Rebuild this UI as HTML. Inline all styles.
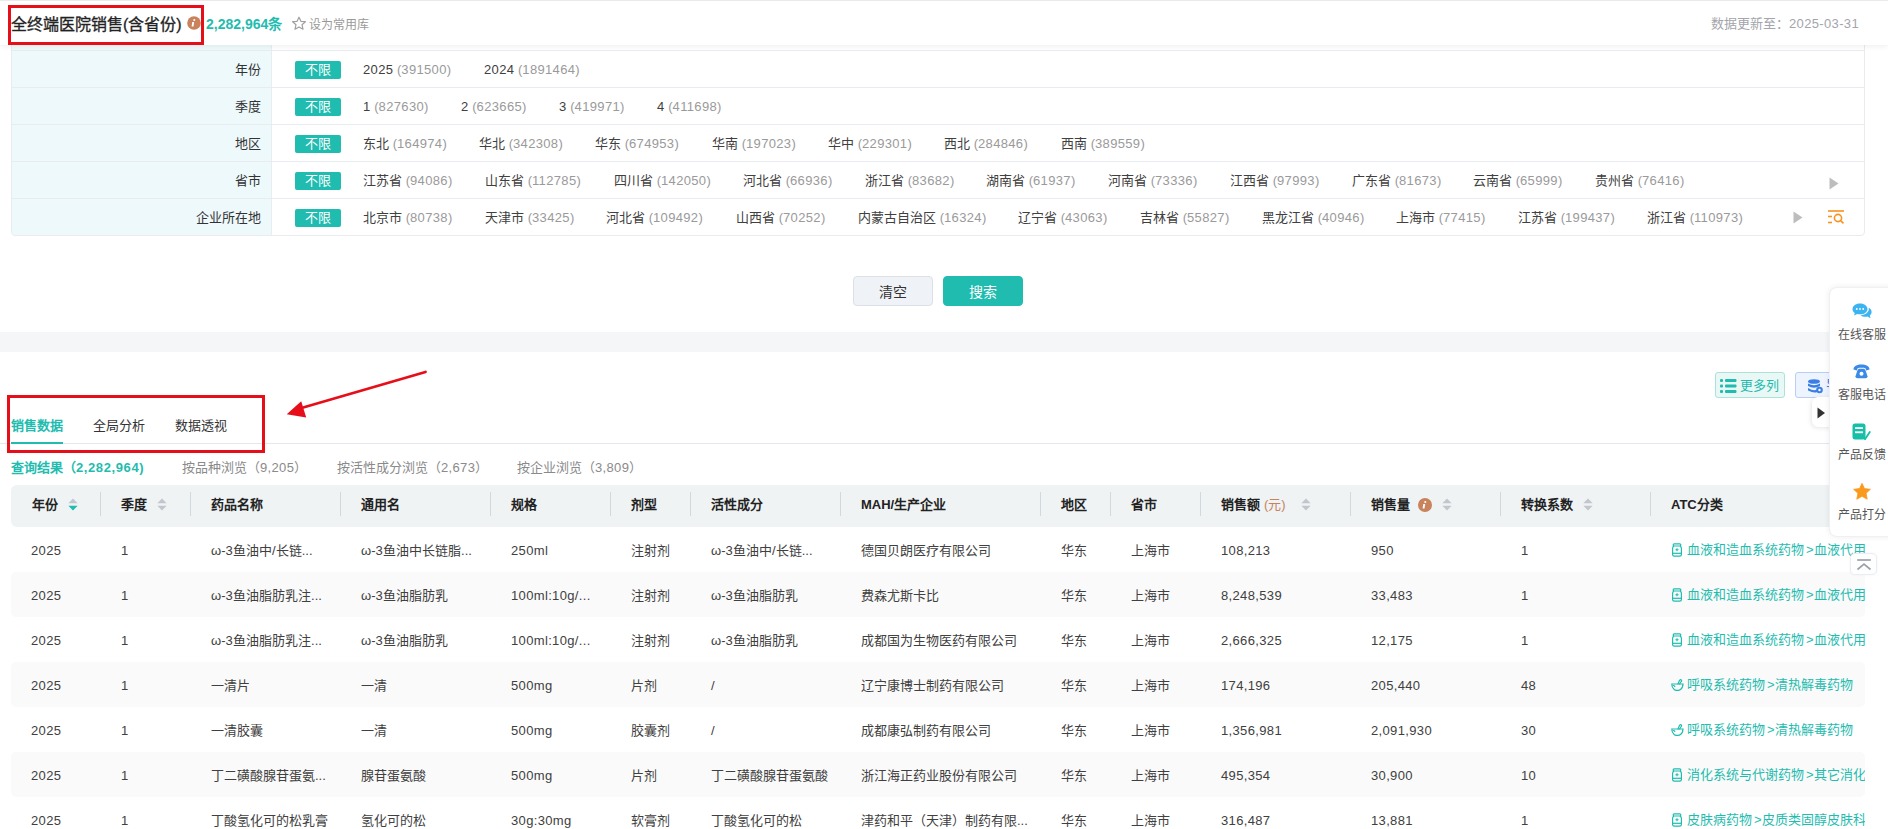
<!DOCTYPE html><html lang="zh-CN"><head><meta charset="utf-8"><style>
*{box-sizing:border-box;margin:0;padding:0}
html,body{width:1888px;height:829px;overflow:hidden;background:#fff}
body{position:relative;font-family:"Liberation Sans",sans-serif;font-size:13px;color:#333}
.a{position:absolute;white-space:nowrap}
.n{letter-spacing:.35px}
.topline{left:0;top:0;width:1888px;height:1px;background:#ececec}
.hdr{left:0;top:1px;width:1888px;height:44px;background:#fff;box-shadow:0 2px 5px rgba(0,0,0,.06);z-index:2}
.title{left:11px;top:14px;font-size:16px;line-height:22px;color:#222;-webkit-text-stroke:.3px #222}
.cnt{left:206px;top:14px;font-size:14px;font-weight:bold;line-height:20px;color:#1fbcaf}
.fav{left:309px;top:16px;font-size:12px;line-height:18px;color:#999}
.upd{left:1711px;top:14px;font-size:13px;line-height:20px;color:#a3a5ab}
.fbox{left:11px;top:36px;width:1854px;height:200px;border:1px solid #e8ecf0;border-radius:4px;background:linear-gradient(to right,#eef9fc 259px,#e9edf0 259px,#e9edf0 260px,#fff 260px);overflow:hidden}
.frow{position:absolute;left:0;width:1852px;height:37px;border-top:1px solid #e8ecf0}
.flab{position:absolute;left:0;top:0;width:260px;height:37px;background:linear-gradient(to right,#eef9fc 259px,#e9edf0 259px);text-align:right;padding-right:11px;line-height:37px;color:#333}
.tag{position:absolute;left:283px;top:10px;width:46px;height:18px;background:#1fbcaf;color:#fff;border-radius:2px;text-align:center;line-height:18px;font-size:13px}
.it{position:absolute;top:1px;line-height:36px;color:#404040}
.it i{font-style:normal;color:#9a9a9a}
.btn{top:276px;width:80px;height:30px;border-radius:4px;text-align:center;line-height:30px;font-size:14px}
.band{left:0;top:332px;width:1888px;height:20px;background:#f5f6f8}
.tabline{left:0;top:443px;width:1888px;height:1px;background:#e4e7ed}
.tab{top:416px;line-height:20px;font-size:13px;color:#333}
.sub{top:458px;line-height:20px;font-size:13px;color:#8a8a8a}
.thead{left:11px;top:485px;width:1854px;height:42px;background:#eff3f4;border-radius:6px}
.th{top:484px;line-height:42px;font-weight:bold;color:#222}
.dv{top:492px;width:1px;height:24px;background:#d2d9dc}
.stripe{left:11px;width:1854px;height:45px;background:#fafafa;border-radius:5px}
.td{line-height:45px;color:#404040;margin-top:1px}
.atc{line-height:45px;color:#1fbcaf}
.atc b{font-weight:normal;margin-left:2px}
.panel{left:1829px;top:287px;width:80px;height:250px;background:#fff;border-radius:8px;box-shadow:0 0 6px rgba(0,0,0,.08);border:1px solid #eef0f4;z-index:5}
.pt{left:1838px;font-size:12px;line-height:14px;color:#555;z-index:6}
</style></head><body>
<div class="a topline"></div>
<div class="a hdr"></div>
<div class="a title" style="z-index:3">全终端医院销售(含省份)</div>
<div class="a" style="left:8px;top:5px;width:196px;height:40px;border:3px solid #e60f19;z-index:4"></div>
<svg class="a" style="left:187px;top:16px;z-index:3" width="14" height="14" viewBox="0 0 14 14"><circle cx="7" cy="7" r="6.8" fill="#c8825c"/><rect x="6.1" y="6" width="1.9" height="4.6" fill="#fff" transform="skewX(-8)"/><circle cx="7.3" cy="4" r="1.05" fill="#fff"/></svg>
<div class="a cnt" style="z-index:3">2,282,964条</div>
<svg class="a" style="left:291px;top:16px;z-index:3" width="16" height="15" viewBox="0 0 16 15"><path d="M8 1.2 L9.9 5.3 L14.4 5.7 L11 8.7 L12 13.2 L8 10.9 L4 13.2 L5 8.7 L1.6 5.7 L6.1 5.3 Z" fill="none" stroke="#a0a0a0" stroke-width="1.2" stroke-linejoin="round"/></svg>
<div class="a fav" style="z-index:3">设为常用库</div>
<div class="a upd" style="z-index:3">数据更新至：<span class=n>2025-03-31</span></div>
<div class="a fbox">
<div class="frow" style="top:13px">
<div class="flab">年份</div>
<div class="tag">不限</div>
<div class="it" style="left:351px"><span class=n>2025</span> <i>(<span class=n>391500</span>)</i></div>
<div class="it" style="left:472px"><span class=n>2024</span> <i>(<span class=n>1891464</span>)</i></div>
</div>
<div class="frow" style="top:50px">
<div class="flab">季度</div>
<div class="tag">不限</div>
<div class="it" style="left:351px"><span class=n>1</span> <i>(<span class=n>827630</span>)</i></div>
<div class="it" style="left:449px"><span class=n>2</span> <i>(<span class=n>623665</span>)</i></div>
<div class="it" style="left:547px"><span class=n>3</span> <i>(<span class=n>419971</span>)</i></div>
<div class="it" style="left:645px"><span class=n>4</span> <i>(<span class=n>411698</span>)</i></div>
</div>
<div class="frow" style="top:87px">
<div class="flab">地区</div>
<div class="tag">不限</div>
<div class="it" style="left:351px">东北 <i>(<span class=n>164974</span>)</i></div>
<div class="it" style="left:467px">华北 <i>(<span class=n>342308</span>)</i></div>
<div class="it" style="left:583px">华东 <i>(<span class=n>674953</span>)</i></div>
<div class="it" style="left:700px">华南 <i>(<span class=n>197023</span>)</i></div>
<div class="it" style="left:816px">华中 <i>(<span class=n>229301</span>)</i></div>
<div class="it" style="left:932px">西北 <i>(<span class=n>284846</span>)</i></div>
<div class="it" style="left:1049px">西南 <i>(<span class=n>389559</span>)</i></div>
</div>
<div class="frow" style="top:124px">
<div class="flab">省市</div>
<div class="tag">不限</div>
<div class="it" style="left:351px">江苏省 <i>(<span class=n>94086</span>)</i></div>
<div class="it" style="left:473px">山东省 <i>(<span class=n>112785</span>)</i></div>
<div class="it" style="left:602px">四川省 <i>(<span class=n>142050</span>)</i></div>
<div class="it" style="left:731px">河北省 <i>(<span class=n>66936</span>)</i></div>
<div class="it" style="left:853px">浙江省 <i>(<span class=n>83682</span>)</i></div>
<div class="it" style="left:974px">湖南省 <i>(<span class=n>61937</span>)</i></div>
<div class="it" style="left:1096px">河南省 <i>(<span class=n>73336</span>)</i></div>
<div class="it" style="left:1218px">江西省 <i>(<span class=n>97993</span>)</i></div>
<div class="it" style="left:1340px">广东省 <i>(<span class=n>81673</span>)</i></div>
<div class="it" style="left:1461px">云南省 <i>(<span class=n>65999</span>)</i></div>
<div class="it" style="left:1583px">贵州省 <i>(<span class=n>76416</span>)</i></div>
</div>
<div class="frow" style="top:161px">
<div class="flab">企业所在地</div>
<div class="tag">不限</div>
<div class="it" style="left:351px">北京市 <i>(<span class=n>80738</span>)</i></div>
<div class="it" style="left:473px">天津市 <i>(<span class=n>33425</span>)</i></div>
<div class="it" style="left:594px">河北省 <i>(<span class=n>109492</span>)</i></div>
<div class="it" style="left:724px">山西省 <i>(<span class=n>70252</span>)</i></div>
<div class="it" style="left:846px">内蒙古自治区 <i>(<span class=n>16324</span>)</i></div>
<div class="it" style="left:1006px">辽宁省 <i>(<span class=n>43063</span>)</i></div>
<div class="it" style="left:1128px">吉林省 <i>(<span class=n>55827</span>)</i></div>
<div class="it" style="left:1250px">黑龙江省 <i>(<span class=n>40946</span>)</i></div>
<div class="it" style="left:1384px">上海市 <i>(<span class=n>77415</span>)</i></div>
<div class="it" style="left:1506px">江苏省 <i>(<span class=n>199437</span>)</i></div>
<div class="it" style="left:1635px">浙江省 <i>(<span class=n>110973</span>)</i></div>
</div>
</div>
<svg class="a" style="left:1829px;top:177px" width="10" height="13" viewBox="0 0 10 13"><path d="M0.5 0.5 L9.5 6.5 L0.5 12.5Z" fill="#bdbdbd"/></svg>
<svg class="a" style="left:1793px;top:211px" width="10" height="13" viewBox="0 0 10 13"><path d="M0.5 0.5 L9.5 6.5 L0.5 12.5Z" fill="#bdbdbd"/></svg>
<svg class="a" style="left:1828px;top:210px" width="17" height="14" viewBox="0 0 17 14"><g fill="none" stroke="#f7931e" stroke-width="1.6"><path d="M0 1 H16"/><path d="M0 6.5 H4"/><path d="M0 12.5 H4"/><circle cx="10" cy="8" r="3.6"/><path d="M12.6 10.6 L15.5 13.3"/></g></svg>
<div class="a btn" style="left:853px;background:#eff2f7;border:1px solid #dcdfe6;color:#333">清空</div>
<div class="a btn" style="left:943px;background:#1fbcaf;border:1px solid #1fbcaf;color:#fff">搜索</div>
<div class="a band"></div>
<div class="a tabline"></div>
<div class="a tab" style="left:11px;color:#1fbcaf;font-weight:bold">销售数据</div>
<div class="a" style="left:11px;top:442px;width:52px;height:2px;background:#1fbcaf"></div>
<div class="a tab" style="left:93px">全局分析</div>
<div class="a tab" style="left:175px">数据透视</div>
<div class="a" style="left:7px;top:395px;width:258px;height:58px;border:3px solid #e60f19;z-index:4"></div>
<svg class="a" style="left:280px;top:365px;z-index:4" width="155" height="60" viewBox="280 365 155 60"><path d="M425.5 372 L298 409" stroke="#e60f19" stroke-width="2.8" stroke-linecap="round"/><path d="M286.7 414.3 L301.2 401.3 L306.2 417.6 Z" fill="#e60f19"/></svg>
<div class="a sub" style="left:11px;color:#1fbcaf;font-weight:bold">查询结果（<span style="letter-spacing:.6px">2,282,964)</span></div>
<div class="a sub" style="left:182px">按品种浏览（<span class=n>9,205</span>）</div>
<div class="a sub" style="left:337px">按活性成分浏览（<span class=n>2,673</span>）</div>
<div class="a sub" style="left:517px">按企业浏览（<span class=n>3,809</span>）</div>
<div class="a" style="left:1715px;top:372px;width:70px;height:26px;border:1px solid #a9e3da;background:#eaf8f5;border-radius:3px"></div>
<svg class="a" style="left:1720px;top:379px" width="17" height="14" viewBox="0 0 17 14"><g fill="#1fbcaf"><rect x="0" y="0" width="3" height="3" rx="1"/><rect x="0" y="5.5" width="3" height="3" rx="1"/><rect x="0" y="11" width="3" height="3" rx="1"/><rect x="5" y="0" width="11.5" height="3" rx="1"/><rect x="5" y="5.5" width="11.5" height="3" rx="1"/><rect x="5" y="11" width="11.5" height="3" rx="1"/></g></svg>
<div class="a" style="left:1740px;top:376px;line-height:20px;color:#1fbcaf">更多列</div>
<div class="a" style="left:1795px;top:372px;width:80px;height:26px;border:1px solid #b7cff5;background:#eef4fd;border-radius:3px"></div>
<svg class="a" style="left:1808px;top:379px" width="15" height="15" viewBox="0 0 15 15"><g fill="#3b7ee6"><ellipse cx="6" cy="2.5" rx="6" ry="2.3"/><path d="M0 4.5 Q6 8 12 4.5 V7 Q6 10.5 0 7Z"/><path d="M0 9 Q6 12.5 9 10.5 V13 Q6 14.5 0 11.5Z"/><circle cx="11.5" cy="11" r="3.3"/></g><circle cx="11.5" cy="11" r="1.2" fill="#fff"/></svg>
<div class="a" style="left:1826px;top:375px;line-height:20px;color:#3b7ee6">导</div>
<div class="a" style="left:1812px;top:397px;width:22px;height:30px;background:#fff;border-radius:6px 0 0 6px;box-shadow:-1px 1px 4px rgba(0,0,0,.1);z-index:4"></div>
<svg class="a" style="left:1817px;top:407px;z-index:6" width="9" height="12" viewBox="0 0 9 12"><path d="M0.5 0.5 L8 6 L0.5 11.5Z" fill="#333"/></svg>
<div class="a thead"></div>
<div class="a th" style="left:32px">年份</div>
<div class="a th" style="left:121px">季度</div>
<div class="a th" style="left:211px">药品名称</div>
<div class="a th" style="left:361px">通用名</div>
<div class="a th" style="left:511px">规格</div>
<div class="a th" style="left:631px">剂型</div>
<div class="a th" style="left:711px">活性成分</div>
<div class="a th" style="left:861px">MAH/生产企业</div>
<div class="a th" style="left:1061px">地区</div>
<div class="a th" style="left:1131px">省市</div>
<div class="a th" style="left:1221px">销售额</div>
<div class="a th" style="left:1371px">销售量</div>
<div class="a th" style="left:1521px">转换系数</div>
<div class="a th" style="left:1671px">ATC分类</div>
<div class="a dv" style="left:100px"></div>
<div class="a dv" style="left:190px"></div>
<div class="a dv" style="left:340px"></div>
<div class="a dv" style="left:490px"></div>
<div class="a dv" style="left:610px"></div>
<div class="a dv" style="left:690px"></div>
<div class="a dv" style="left:840px"></div>
<div class="a dv" style="left:1040px"></div>
<div class="a dv" style="left:1110px"></div>
<div class="a dv" style="left:1200px"></div>
<div class="a dv" style="left:1350px"></div>
<div class="a dv" style="left:1500px"></div>
<div class="a dv" style="left:1650px"></div>
<div class="a" style="left:1264px;top:484px;line-height:42px;color:#c8825c">(元)</div>
<svg class="a" style="left:68px;top:498px" width="10" height="13" viewBox="0 0 10 13"><path d="M5 0.4 L9.6 5.3 H0.4Z" fill="#c3c6cc"/><path d="M5 12.6 L9.6 7.7 H0.4Z" fill="#1fbcaf"/></svg>
<svg class="a" style="left:157px;top:498px" width="10" height="13" viewBox="0 0 10 13"><path d="M5 0.4 L9.6 5.3 H0.4Z" fill="#c3c6cc"/><path d="M5 12.6 L9.6 7.7 H0.4Z" fill="#c3c6cc"/></svg>
<svg class="a" style="left:1301px;top:498px" width="10" height="13" viewBox="0 0 10 13"><path d="M5 0.4 L9.6 5.3 H0.4Z" fill="#c3c6cc"/><path d="M5 12.6 L9.6 7.7 H0.4Z" fill="#c3c6cc"/></svg>
<svg class="a" style="left:1442px;top:498px" width="10" height="13" viewBox="0 0 10 13"><path d="M5 0.4 L9.6 5.3 H0.4Z" fill="#c3c6cc"/><path d="M5 12.6 L9.6 7.7 H0.4Z" fill="#c3c6cc"/></svg>
<svg class="a" style="left:1583px;top:498px" width="10" height="13" viewBox="0 0 10 13"><path d="M5 0.4 L9.6 5.3 H0.4Z" fill="#c3c6cc"/><path d="M5 12.6 L9.6 7.7 H0.4Z" fill="#c3c6cc"/></svg>
<svg class="a" style="left:1418px;top:498px" width="14" height="14" viewBox="0 0 14 14"><circle cx="7" cy="7" r="7" fill="#c8825c"/><rect x="6.1" y="6" width="1.9" height="4.6" fill="#fff" transform="skewX(-8)"/><circle cx="7.3" cy="4" r="1.05" fill="#fff"/></svg>
<div class="a td" style="left:31px;top:527px"><span class=n>2025</span></div>
<div class="a td" style="left:121px;top:527px"><span class=n>1</span></div>
<div class="a td" style="left:211px;top:527px">ω-<span class=n>3</span>鱼油中/长链...</div>
<div class="a td" style="left:361px;top:527px">ω-<span class=n>3</span>鱼油中长链脂...</div>
<div class="a td" style="left:511px;top:527px"><span class=n>250ml</span></div>
<div class="a td" style="left:631px;top:527px">注射剂</div>
<div class="a td" style="left:711px;top:527px">ω-<span class=n>3</span>鱼油中/长链...</div>
<div class="a td" style="left:861px;top:527px">德国贝朗医疗有限公司</div>
<div class="a td" style="left:1061px;top:527px">华东</div>
<div class="a td" style="left:1131px;top:527px">上海市</div>
<div class="a td" style="left:1221px;top:527px"><span class=n>108,213</span></div>
<div class="a td" style="left:1371px;top:527px"><span class=n>950</span></div>
<div class="a td" style="left:1521px;top:527px"><span class=n>1</span></div>
<svg class="a" style="left:1672px;top:543px" width="10" height="14" viewBox="0 0 10 14"><g fill="none" stroke="#1fbcaf" stroke-width="1.2"><rect x="1.2" y="0.8" width="7.6" height="2.2" rx="1"/><path d="M1.8 3 Q0.6 4 0.6 5.5 V11.5 Q0.6 13.2 2.3 13.2 H7.7 Q9.4 13.2 9.4 11.5 V5.5 Q9.4 4 8.2 3"/><path d="M0.6 10.3 H9.4"/></g><path d="M3.4 6.8 H6.6 M5 5.3 V8.3" stroke="#1fbcaf" stroke-width="1.1"/></svg>
<div class="a atc" style="left:1687px;top:527px;width:178px;overflow:hidden">血液和造血系统药物<b>&gt;</b>血液代用品</div>
<div class="a stripe" style="top:572px"></div>
<div class="a td" style="left:31px;top:572px"><span class=n>2025</span></div>
<div class="a td" style="left:121px;top:572px"><span class=n>1</span></div>
<div class="a td" style="left:211px;top:572px">ω-<span class=n>3</span>鱼油脂肪乳注...</div>
<div class="a td" style="left:361px;top:572px">ω-<span class=n>3</span>鱼油脂肪乳</div>
<div class="a td" style="left:511px;top:572px"><span class=n>100ml:10g/...</span></div>
<div class="a td" style="left:631px;top:572px">注射剂</div>
<div class="a td" style="left:711px;top:572px">ω-<span class=n>3</span>鱼油脂肪乳</div>
<div class="a td" style="left:861px;top:572px">费森尤斯卡比</div>
<div class="a td" style="left:1061px;top:572px">华东</div>
<div class="a td" style="left:1131px;top:572px">上海市</div>
<div class="a td" style="left:1221px;top:572px"><span class=n>8,248,539</span></div>
<div class="a td" style="left:1371px;top:572px"><span class=n>33,483</span></div>
<div class="a td" style="left:1521px;top:572px"><span class=n>1</span></div>
<svg class="a" style="left:1672px;top:588px" width="10" height="14" viewBox="0 0 10 14"><g fill="none" stroke="#1fbcaf" stroke-width="1.2"><rect x="1.2" y="0.8" width="7.6" height="2.2" rx="1"/><path d="M1.8 3 Q0.6 4 0.6 5.5 V11.5 Q0.6 13.2 2.3 13.2 H7.7 Q9.4 13.2 9.4 11.5 V5.5 Q9.4 4 8.2 3"/><path d="M0.6 10.3 H9.4"/></g><path d="M3.4 6.8 H6.6 M5 5.3 V8.3" stroke="#1fbcaf" stroke-width="1.1"/></svg>
<div class="a atc" style="left:1687px;top:572px;width:178px;overflow:hidden">血液和造血系统药物<b>&gt;</b>血液代用品</div>
<div class="a td" style="left:31px;top:617px"><span class=n>2025</span></div>
<div class="a td" style="left:121px;top:617px"><span class=n>1</span></div>
<div class="a td" style="left:211px;top:617px">ω-<span class=n>3</span>鱼油脂肪乳注...</div>
<div class="a td" style="left:361px;top:617px">ω-<span class=n>3</span>鱼油脂肪乳</div>
<div class="a td" style="left:511px;top:617px"><span class=n>100ml:10g/...</span></div>
<div class="a td" style="left:631px;top:617px">注射剂</div>
<div class="a td" style="left:711px;top:617px">ω-<span class=n>3</span>鱼油脂肪乳</div>
<div class="a td" style="left:861px;top:617px">成都国为生物医药有限公司</div>
<div class="a td" style="left:1061px;top:617px">华东</div>
<div class="a td" style="left:1131px;top:617px">上海市</div>
<div class="a td" style="left:1221px;top:617px"><span class=n>2,666,325</span></div>
<div class="a td" style="left:1371px;top:617px"><span class=n>12,175</span></div>
<div class="a td" style="left:1521px;top:617px"><span class=n>1</span></div>
<svg class="a" style="left:1672px;top:633px" width="10" height="14" viewBox="0 0 10 14"><g fill="none" stroke="#1fbcaf" stroke-width="1.2"><rect x="1.2" y="0.8" width="7.6" height="2.2" rx="1"/><path d="M1.8 3 Q0.6 4 0.6 5.5 V11.5 Q0.6 13.2 2.3 13.2 H7.7 Q9.4 13.2 9.4 11.5 V5.5 Q9.4 4 8.2 3"/><path d="M0.6 10.3 H9.4"/></g><path d="M3.4 6.8 H6.6 M5 5.3 V8.3" stroke="#1fbcaf" stroke-width="1.1"/></svg>
<div class="a atc" style="left:1687px;top:617px;width:178px;overflow:hidden">血液和造血系统药物<b>&gt;</b>血液代用品</div>
<div class="a stripe" style="top:662px"></div>
<div class="a td" style="left:31px;top:662px"><span class=n>2025</span></div>
<div class="a td" style="left:121px;top:662px"><span class=n>1</span></div>
<div class="a td" style="left:211px;top:662px">一清片</div>
<div class="a td" style="left:361px;top:662px">一清</div>
<div class="a td" style="left:511px;top:662px"><span class=n>500mg</span></div>
<div class="a td" style="left:631px;top:662px">片剂</div>
<div class="a td" style="left:711px;top:662px">/</div>
<div class="a td" style="left:861px;top:662px">辽宁康博士制药有限公司</div>
<div class="a td" style="left:1061px;top:662px">华东</div>
<div class="a td" style="left:1131px;top:662px">上海市</div>
<div class="a td" style="left:1221px;top:662px"><span class=n>174,196</span></div>
<div class="a td" style="left:1371px;top:662px"><span class=n>205,440</span></div>
<div class="a td" style="left:1521px;top:662px"><span class=n>48</span></div>
<svg class="a" style="left:1671px;top:679px" width="13" height="12" viewBox="0 0 13 12"><g fill="none" stroke="#1fbcaf" stroke-width="1.2" stroke-linecap="round"><path d="M0.8 5 H12 Q11.8 9 9.5 10.5 Q8.5 11.3 7 11.3 H5.5 Q4 11.3 3 10.3 Q0.8 8.5 0.8 5Z"/><path d="M7 5 L8.5 1.3 Q9.5 0.3 10.3 1 Q11 1.8 10 2.8 L8.6 5"/><path d="M2.5 6.5 Q3.3 6.4 3.8 7.4"/></g></svg>
<div class="a atc" style="left:1687px;top:662px;width:178px;overflow:hidden">呼吸系统药物<b>&gt;</b>清热解毒药物</div>
<div class="a td" style="left:31px;top:707px"><span class=n>2025</span></div>
<div class="a td" style="left:121px;top:707px"><span class=n>1</span></div>
<div class="a td" style="left:211px;top:707px">一清胶囊</div>
<div class="a td" style="left:361px;top:707px">一清</div>
<div class="a td" style="left:511px;top:707px"><span class=n>500mg</span></div>
<div class="a td" style="left:631px;top:707px">胶囊剂</div>
<div class="a td" style="left:711px;top:707px">/</div>
<div class="a td" style="left:861px;top:707px">成都康弘制药有限公司</div>
<div class="a td" style="left:1061px;top:707px">华东</div>
<div class="a td" style="left:1131px;top:707px">上海市</div>
<div class="a td" style="left:1221px;top:707px"><span class=n>1,356,981</span></div>
<div class="a td" style="left:1371px;top:707px"><span class=n>2,091,930</span></div>
<div class="a td" style="left:1521px;top:707px"><span class=n>30</span></div>
<svg class="a" style="left:1671px;top:724px" width="13" height="12" viewBox="0 0 13 12"><g fill="none" stroke="#1fbcaf" stroke-width="1.2" stroke-linecap="round"><path d="M0.8 5 H12 Q11.8 9 9.5 10.5 Q8.5 11.3 7 11.3 H5.5 Q4 11.3 3 10.3 Q0.8 8.5 0.8 5Z"/><path d="M7 5 L8.5 1.3 Q9.5 0.3 10.3 1 Q11 1.8 10 2.8 L8.6 5"/><path d="M2.5 6.5 Q3.3 6.4 3.8 7.4"/></g></svg>
<div class="a atc" style="left:1687px;top:707px;width:178px;overflow:hidden">呼吸系统药物<b>&gt;</b>清热解毒药物</div>
<div class="a stripe" style="top:752px"></div>
<div class="a td" style="left:31px;top:752px"><span class=n>2025</span></div>
<div class="a td" style="left:121px;top:752px"><span class=n>1</span></div>
<div class="a td" style="left:211px;top:752px">丁二磺酸腺苷蛋氨...</div>
<div class="a td" style="left:361px;top:752px">腺苷蛋氨酸</div>
<div class="a td" style="left:511px;top:752px"><span class=n>500mg</span></div>
<div class="a td" style="left:631px;top:752px">片剂</div>
<div class="a td" style="left:711px;top:752px">丁二磺酸腺苷蛋氨酸</div>
<div class="a td" style="left:861px;top:752px">浙江海正药业股份有限公司</div>
<div class="a td" style="left:1061px;top:752px">华东</div>
<div class="a td" style="left:1131px;top:752px">上海市</div>
<div class="a td" style="left:1221px;top:752px"><span class=n>495,354</span></div>
<div class="a td" style="left:1371px;top:752px"><span class=n>30,900</span></div>
<div class="a td" style="left:1521px;top:752px"><span class=n>10</span></div>
<svg class="a" style="left:1672px;top:768px" width="10" height="14" viewBox="0 0 10 14"><g fill="none" stroke="#1fbcaf" stroke-width="1.2"><rect x="1.2" y="0.8" width="7.6" height="2.2" rx="1"/><path d="M1.8 3 Q0.6 4 0.6 5.5 V11.5 Q0.6 13.2 2.3 13.2 H7.7 Q9.4 13.2 9.4 11.5 V5.5 Q9.4 4 8.2 3"/><path d="M0.6 10.3 H9.4"/></g><path d="M3.4 6.8 H6.6 M5 5.3 V8.3" stroke="#1fbcaf" stroke-width="1.1"/></svg>
<div class="a atc" style="left:1687px;top:752px;width:178px;overflow:hidden">消化系统与代谢药物<b>&gt;</b>其它消化道</div>
<div class="a td" style="left:31px;top:797px"><span class=n>2025</span></div>
<div class="a td" style="left:121px;top:797px"><span class=n>1</span></div>
<div class="a td" style="left:211px;top:797px">丁酸氢化可的松乳膏</div>
<div class="a td" style="left:361px;top:797px">氢化可的松</div>
<div class="a td" style="left:511px;top:797px"><span class=n>30g:30mg</span></div>
<div class="a td" style="left:631px;top:797px">软膏剂</div>
<div class="a td" style="left:711px;top:797px">丁酸氢化可的松</div>
<div class="a td" style="left:861px;top:797px">津药和平（天津）制药有限...</div>
<div class="a td" style="left:1061px;top:797px">华东</div>
<div class="a td" style="left:1131px;top:797px">上海市</div>
<div class="a td" style="left:1221px;top:797px"><span class=n>316,487</span></div>
<div class="a td" style="left:1371px;top:797px"><span class=n>13,881</span></div>
<div class="a td" style="left:1521px;top:797px"><span class=n>1</span></div>
<svg class="a" style="left:1672px;top:813px" width="10" height="14" viewBox="0 0 10 14"><g fill="none" stroke="#1fbcaf" stroke-width="1.2"><rect x="1.2" y="0.8" width="7.6" height="2.2" rx="1"/><path d="M1.8 3 Q0.6 4 0.6 5.5 V11.5 Q0.6 13.2 2.3 13.2 H7.7 Q9.4 13.2 9.4 11.5 V5.5 Q9.4 4 8.2 3"/><path d="M0.6 10.3 H9.4"/></g><path d="M3.4 6.8 H6.6 M5 5.3 V8.3" stroke="#1fbcaf" stroke-width="1.1"/></svg>
<div class="a atc" style="left:1687px;top:797px;width:178px;overflow:hidden">皮肤病药物<b>&gt;</b>皮质类固醇皮肤科</div>
<div class="a panel"></div>
<svg class="a" style="left:1852px;top:303px;z-index:6" width="20" height="16" viewBox="0 0 20 16"><path d="M8 0.5 C12.5 0.5 15.5 3 15.5 6 C15.5 9 12.5 11.3 8 11.3 C7 11.3 6 11.2 5.2 11 L2 12.6 L2.8 10 C1.2 9 0.5 7.6 0.5 6 C0.5 3 3.5 0.5 8 0.5Z" fill="#3cb4f2"/><path d="M16.6 4.8 C18.6 5.8 19.6 7.3 19.6 9 C19.6 10.4 18.9 11.6 17.8 12.4 L18.5 15.3 L15.4 13.6 C14.8 13.7 14.2 13.8 13.5 13.8 C11.5 13.8 9.8 13.2 8.7 12.2 C13.5 12 16.8 9.2 16.8 6 Z" fill="#3cb4f2"/><g fill="#fff"><circle cx="4.8" cy="6" r="0.9"/><circle cx="8" cy="6" r="0.9"/><circle cx="11.2" cy="6" r="0.9"/></g></svg>
<div class="a pt" style="top:328px">在线客服</div>
<svg class="a" style="left:1853px;top:364px;z-index:6" width="17" height="15" viewBox="0 0 17 15"><path d="M0.5 5.5 C0.5 2 4 0.5 8.5 0.5 C13 0.5 16.5 2 16.5 5.5 L13.2 6.5 L12.2 4 C11 3.5 6 3.5 4.8 4 L3.8 6.5Z" fill="#3b8ae6"/><path d="M4.3 6.8 L5.6 4.8 H11.4 L12.7 6.8 L14.5 12.2 Q14.6 14.3 12.5 14.3 H4.5 Q2.4 14.3 2.5 12.2Z" fill="#3b8ae6"/><circle cx="8.5" cy="9.8" r="2" fill="#fff"/></svg>
<div class="a pt" style="top:388px">客服电话</div>
<svg class="a" style="left:1852px;top:423px;z-index:6" width="19" height="17" viewBox="0 0 19 17"><rect x="0.5" y="0.5" width="13" height="16" rx="2.5" fill="#15bfa8"/><rect x="3" y="4.2" width="8" height="1.8" fill="#fff"/><rect x="3" y="8.4" width="8" height="1.8" fill="#fff"/><path d="M13 16.3 L17.8 9" stroke="#15bfa8" stroke-width="1.8" stroke-linecap="round"/></svg>
<div class="a pt" style="top:448px">产品反馈</div>
<svg class="a" style="left:1853px;top:483px;z-index:6" width="18" height="17" viewBox="0 0 18 17"><path d="M9 0.3 L11.5 5.6 L17.4 6.3 L13.1 10.3 L14.2 16.2 L9 13.3 L3.8 16.2 L4.9 10.3 L0.6 6.3 L6.5 5.6Z" fill="#f99a1f" stroke="#f99a1f" stroke-width="0.8" stroke-linejoin="round"/></svg>
<div class="a pt" style="top:508px">产品打分</div>
<div class="a" style="left:1850px;top:553px;width:27px;height:22px;background:#fff;border:1px solid #e9eef6;border-radius:5px;box-shadow:0 0 3px rgba(0,30,80,.05);z-index:6"></div>
<svg class="a" style="left:1856px;top:558px;z-index:7" width="16" height="13" viewBox="0 0 16 13"><g fill="none" stroke="#9ba1aa" stroke-width="1.7"><path d="M1.2 2 H14.8"/><path d="M1.5 11.5 L8 6 L14.5 11.5"/></g></svg>
</body></html>
